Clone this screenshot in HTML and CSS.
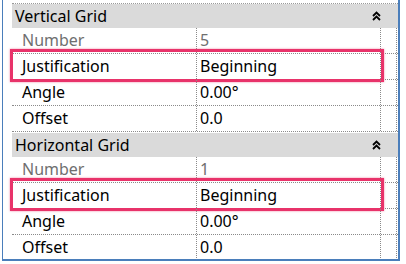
FILE: index.html
```html
<!DOCTYPE html>
<html>
<head>
<meta charset="utf-8">
<link rel="stylesheet" href="styles.css">
</head>
<body>
<div class="frame">
  <div class="panel">
    <div class="topline"></div>
    <section class="group">
      <div class="hdr"><span class="hdr-title">Vertical Grid</span><span class="chev"><svg width="9" height="10" viewBox="0 0 9 10"><path d="M1 5 L4.5 1.5 L8 5 M1 9 L4.5 5.5 L8 9" fill="none" stroke="#000" stroke-width="1.8"/></svg></span></div>
      <div class="row ro"><div class="c1">Number</div><div class="c2">5</div><div class="c3"></div></div>
      <div class="row hl"><div class="c1">Justification</div><div class="c2">Beginning</div><div class="c3"></div><div class="mark"></div></div>
      <div class="row"><div class="c1">Angle</div><div class="c2">0.00°</div><div class="c3"></div></div>
      <div class="row"><div class="c1">Offset</div><div class="c2">0.0</div><div class="c3"></div></div>
    </section>
    <section class="group">
      <div class="hdr"><span class="hdr-title">Horizontal Grid</span><span class="chev"><svg width="9" height="10" viewBox="0 0 9 10"><path d="M1 5 L4.5 1.5 L8 5 M1 9 L4.5 5.5 L8 9" fill="none" stroke="#000" stroke-width="1.8"/></svg></span></div>
      <div class="row ro"><div class="c1">Number</div><div class="c2">1</div><div class="c3"></div></div>
      <div class="row hl"><div class="c1">Justification</div><div class="c2">Beginning</div><div class="c3"></div><div class="mark"></div></div>
      <div class="row"><div class="c1">Angle</div><div class="c2">0.00°</div><div class="c3"></div></div>
      <div class="row"><div class="c1">Offset</div><div class="c2">0.0</div><div class="c3"></div></div>
    </section>
  </div>
</div>
</body>
</html>
```
FILE: styles.css
```css
html, body {
  margin: 0;
  padding: 0;
  background: #ffffff;
}
body {
  width: 406px;
  height: 264px;
  overflow: hidden;
  font-family: "Noto Sans", "Open Sans", sans-serif;
  font-size: 16px;
  color: #000;
}
.frame {
  margin-left: 2px;
  width: 395px;
  height: 259px;
  border-left: 1px solid #4a7ebb;
  border-right: 2px solid #4a7ebb;
  border-bottom: 2px solid #4a7ebb;
  overflow: hidden;
  background: #fff;
}
.panel {
  margin-left: 9px;
  width: 386px;
  padding-top: 3px;
}
.topline {
  height: 0;
  border-top: 1px dotted #9a9a9a;
}
.group + .group {
  margin-top: 1px;
}
.hdr {
  height: 24px;
  background: #dadada;
  display: flex;
  align-items: center;
  justify-content: space-between;
}
.hdr-title {
  padding-left: 3px;
}
.chev {
  display: flex;
  width: 17px;
  margin-right: 13px;
  justify-content: center;
}
.row {
  position: relative;
  display: grid;
  grid-template-columns: 184px 184px 17px;
  height: 25px;
  border-bottom: 1px dotted #8a8a8a;
  line-height: 25px;
}
.c1 {
  padding-left: 10px;
}
.c2 {
  border-left: 1px dotted #8a8a8a;
  padding-left: 3px;
}
.c3 {
  border-left: 1px dotted #8a8a8a;
  border-right: 1px dotted #8a8a8a;
}
.ro .c1, .ro .c2 {
  color: #6f6f6f;
}
.mark {
  position: absolute;
  left: -2px;
  right: 14px;
  top: -5px;
  bottom: -3px;
  border: 3px solid #e8336a;
  box-shadow: 0 0 2px rgba(232, 51, 106, 0.6);
  pointer-events: none;
}
```
